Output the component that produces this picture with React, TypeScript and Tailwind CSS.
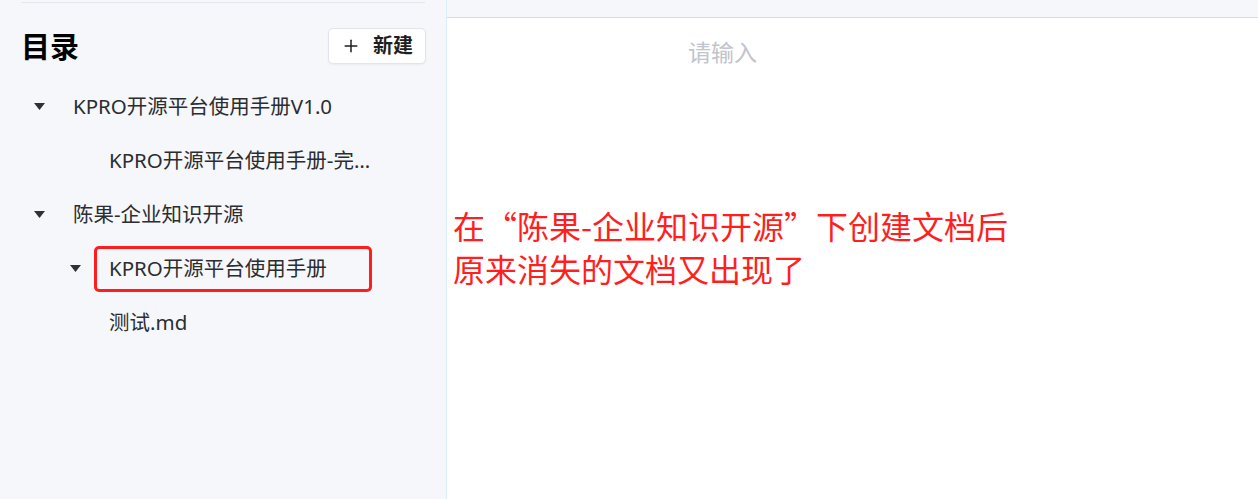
import React from "react";
import { Plus } from "lucide-react";

const font = { fontFamily: '"Noto Sans", "Noto Sans CJK SC", sans-serif' };

function Caret() {
  return (
    <svg width="11" height="7" viewBox="0 0 11 7" className="text-[#303133]">
      <path d="M0 0 L11 0 L5.5 7 Z" fill="currentColor" />
    </svg>
  );
}

type Row = { label: string; level: number; caret: boolean; marked?: boolean };

const rows: Row[] = [
  { label: "KPRO开源平台使用手册V1.0", level: 0, caret: true },
  { label: "KPRO开源平台使用手册-完整版说明文档", level: 1, caret: false },
  { label: "陈果-企业知识开源", level: 0, caret: true },
  { label: "KPRO开源平台使用手册", level: 1, caret: true, marked: true },
  { label: "测试.md", level: 1, caret: false },
];

export default function App() {
  return (
    <div className="flex h-[499px] w-[1258px] overflow-hidden bg-white" style={font}>
      <aside className="w-[447px] shrink-0 bg-[#f5f7fb] border-r border-[#dbeefa] px-[21px]">
        <div className="mt-[2px] border-t border-[#e3e6ec]" />
        <div className="flex items-center justify-between h-[76px] pt-[10px]">
          <h1 className="text-[29px] font-bold text-black leading-none">目录</h1>
          <button
            type="button"
            className="flex items-center gap-[12px] h-[36px] w-[98px] -mr-[1px] justify-center bg-white border border-[#e2e4ea] rounded-[5px] shadow-[0_1px_2px_rgba(0,0,0,0.05)] text-[20px] font-bold text-[#1f1f1f]"
          >
            <Plus className="w-[20px] h-[20px]" strokeWidth={1.8} />
            <span className="leading-none">新建</span>
          </button>
        </div>
        <ul>
          {rows.map((r, i) => (
            <li
              key={i}
              className="relative flex items-center h-[54px] text-[20.5px] text-[#2b2d31]"
              style={{ paddingLeft: r.level * 36 }}
            >
              <span className="w-[52px] shrink-0 pl-[13px] flex items-center">
                {r.caret && <Caret />}
              </span>
              <span className="truncate max-w-[266px] leading-[30px]">{r.label}</span>
              {r.marked && (
                <span className="absolute left-[73px] top-[5px] w-[278px] h-[46px] border-[3px] border-[#ff1d1d] rounded-[5px]" />
              )}
            </li>
          ))}
        </ul>
      </aside>
      <main className="flex-1">
        <div className="h-[18px] bg-[#f5f7fa] border-b border-[#d8dbe2]" />
        <div className="pl-[241px] mt-[17px] text-[23px] leading-[34px] text-[#c0c4cc]">请输入</div>
        <div
          className="pl-[6px] mt-[135px] text-[32px] leading-[43px] text-[#ff1f1f]"
          style={{ fontFamily: '"Noto Sans CJK SC", sans-serif' }}
        >
          <p>在“陈果-企业知识开源”下创建文档后</p>
          <p>原来消失的文档又出现了</p>
        </div>
      </main>
    </div>
  );
}
